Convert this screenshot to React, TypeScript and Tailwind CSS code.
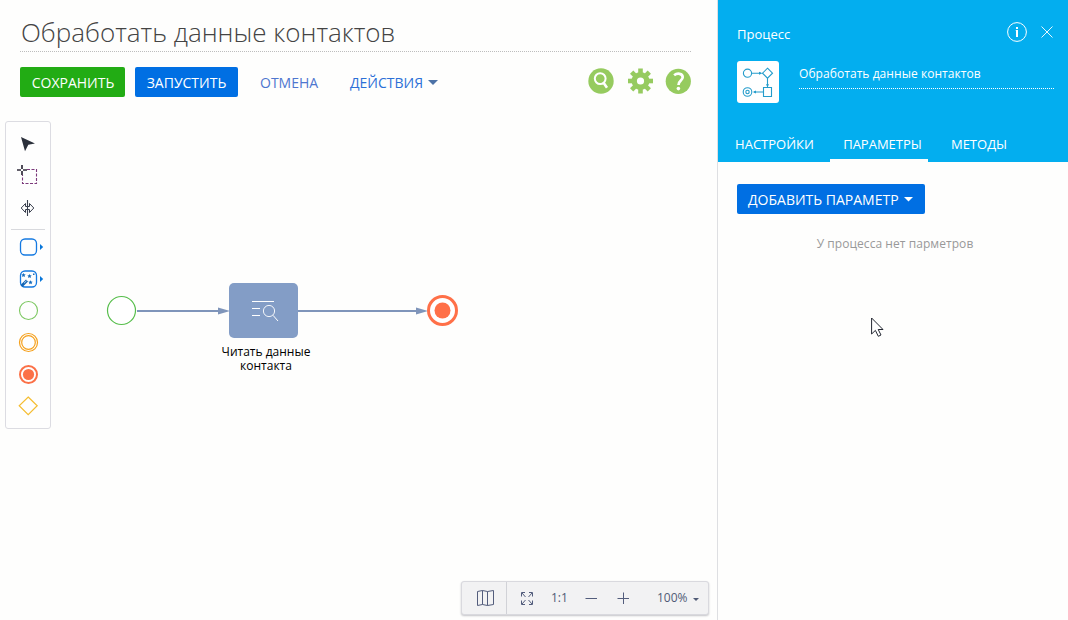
import React from "react";

const font = "font-['Open_Sans','Noto_Sans',sans-serif]";

function Caret({ className }: { className: string }) {
  return (
    <svg width="10" height="5" viewBox="0 0 10 5" className={className}>
      <path d="M0 0H10L5 5Z" fill="currentColor" />
    </svg>
  );
}

function HeaderIcons() {
  return (
    <div className="mt-px flex h-[26px] items-center gap-[13px] text-[#96cb5f]">
      <svg width="26" height="26" viewBox="0 0 26 26">
        <circle cx="13" cy="13" r="12.7" fill="currentColor" />
        <circle cx="12.2" cy="10.6" r="5.4" fill="none" stroke="#fff" strokeWidth="2" />
        <path d="M15.2 14.3L19 19.8" stroke="#fff" strokeWidth="2.6" />
      </svg>
      <svg width="26" height="26" viewBox="0 0 26 26">
        <g fill="currentColor" transform="translate(.5 0)">
          <circle cx="13" cy="13" r="9" />
          <path d="M10.7 .5h4.6v25h-4.6z" />
          <path d="M10.7 .5h4.6v25h-4.6z" transform="rotate(45 13 13)" />
          <path d="M10.7 .5h4.6v25h-4.6z" transform="rotate(90 13 13)" />
          <path d="M10.7 .5h4.6v25h-4.6z" transform="rotate(135 13 13)" />
          <circle cx="13" cy="13" r="3.6" fill="#fff" />
        </g>
      </svg>
      <svg width="26" height="26" viewBox="0 0 26 26" className="-ml-px">
        <g transform="translate(.3 .3)">
          <circle cx="13" cy="13" r="12.6" fill="currentColor" />
          <path d="M8.8 7C12 4.4 17.4 5 17.4 9C17.4 12.2 13.2 12.4 13.2 16.6" fill="none" stroke="#fff" strokeWidth="2.7" />
          <circle cx="13.1" cy="20.3" r="1.8" fill="#fff" />
        </g>
      </svg>
    </div>
  );
}

function Palette() {
  return (
    <aside className="mt-6 ml-[5px] flex h-[308px] w-[46px] flex-col items-center rounded-[3px] border border-[#dcdce2] bg-[#fefefe] pt-[6px]">
      <svg width="36" height="32" viewBox="0 0 36 32">
        <path d="M11 9L25 15.4L18.3 16.8L15 23.2Z" fill="#2b303b" />
      </svg>
      <svg width="36" height="32" viewBox="0 0 36 32" fill="none">
        <path d="M17 9.5H26.5V23.5H12.5V15" stroke="#7b397b" strokeWidth="1.1" strokeDasharray="3 1.5" />
        <path d="M12 5V9M12 11V15M7 10H11M13 10H17" stroke="#302c3b" strokeWidth="1.7" />
      </svg>
      <svg width="36" height="32" viewBox="0 0 36 32" fill="none" stroke="#383e4d">
        <path d="M17.5 8V24" strokeWidth="1.1" />
        <path d="M15.5 11.5L11.2 16L15.5 20.5V17.5H19.5V20.5L23.8 16L19.5 11.5V14.5H15.5Z" />
      </svg>
      <div className="mt-[5px] mb-px h-px w-[34px] shrink-0 bg-[#d8d9dd]" />
      <svg width="36" height="32" viewBox="0 0 36 32">
        <rect x="10.5" y="8" width="16" height="16" rx="4.5" fill="none" stroke="#1479e1" strokeWidth="1.3" />
        <path d="M30 13L33.2 16L30 19Z" fill="#0876d9" />
      </svg>
      <svg width="36" height="32" viewBox="0 0 36 32">
        <rect x="10.5" y="8" width="16" height="16" rx="4.5" fill="none" stroke="#1479e1" strokeWidth="1.3" />
        <path d="M11.5 23L17 17.5" stroke="#1265b4" strokeWidth="2.8" />
        <path d="M14 20.2L16.6 17.7" stroke="#fff" strokeWidth=".7" />
        <path d="M13.5 10l.7 1.3 1.5.2-1.1 1 .3 1.5-1.4-.7-1.4.7.3-1.5-1.1-1 1.5-.2zM19.5 11l.7 1.3 1.5.2-1.1 1 .3 1.5-1.4-.7-1.4.7.3-1.5-1.1-1 1.5-.2zM20.5 17.2l.7 1.3 1.5.2-1.1 1 .3 1.5-1.4-.7-1.4.7.3-1.5-1.1-1 1.5-.2zM23 10.5h1.5V12H23z" fill="#176cbd" />
        <path d="M30 13L33.2 16L30 19Z" fill="#0876d9" />
      </svg>
      <svg width="36" height="32" viewBox="0 0 36 32">
        <circle cx="18.5" cy="15.5" r="9" fill="none" stroke="#7bc760" strokeWidth="1.1" />
      </svg>
      <svg width="36" height="32" viewBox="0 0 36 32" fill="none" stroke="#f5a01c">
        <circle cx="18.5" cy="15.5" r="9" strokeWidth="1.2" />
        <circle cx="18.5" cy="15.5" r="6.8" strokeWidth="1.2" />
      </svg>
      <svg width="36" height="32" viewBox="0 0 36 32">
        <circle cx="18.5" cy="15.5" r="8.5" fill="none" stroke="#fb7047" strokeWidth="2" />
        <circle cx="18.5" cy="15.5" r="5.6" fill="#fb7047" />
      </svg>
      <svg width="36" height="32" viewBox="0 0 36 32">
        <path d="M18.2 6L27.2 14.8L18.2 23.6L9.2 14.8Z" fill="none" stroke="#f5bd31" strokeWidth="1.2" />
      </svg>
    </aside>
  );
}

function Diagram() {
  return (
    <>
      <svg className="absolute top-[183px] left-[100px]" width="370" height="60" viewBox="0 0 370 60">
        <circle cx="21.5" cy="30.5" r="14" fill="#fff" stroke="#57be4b" strokeWidth="1.2" />
        <path d="M37 31H121M198 31H319" stroke="#7f95ba" strokeWidth="2" />
        <path d="M118 27.6L130 31L118 34.4ZM316 27.6L328 31L316 34.4Z" fill="#7f95ba" />
        <circle cx="342.5" cy="30.5" r="14" fill="#fff" stroke="#ff7048" strokeWidth="3" />
        <circle cx="342.5" cy="30.5" r="8" fill="#ff7048" />
      </svg>
      <div className="absolute top-[186px] left-[229px] h-[55px] w-[69px] rounded-[5px] bg-[#839dc6]">
        <svg width="69" height="55" viewBox="0 0 69 55" fill="none" stroke="#fff">
          <path d="M23 18.5H45M23 25.5H31M23 32.5H31" />
          <circle cx="40" cy="28" r="5.6" strokeWidth=".9" />
          <path d="M44 32.3L49 38" />
        </svg>
      </div>
      <p className="absolute top-[248px] left-[216px] w-[100px] text-center text-[12px] leading-[14px] text-black">
        Читать данные контакта
      </p>
    </>
  );
}

function ZoomBar() {
  return (
    <div className="absolute bottom-[5px] left-[461px] flex h-[34px] w-[248px] items-center rounded-[3px] border border-[#d9d9de] bg-[#f2f2f3] text-[12px] text-[#505b76] shadow-[0_1px_2px_#c4c4c8]">
      <div className="flex h-full w-[45px] items-center justify-center border-r border-[#d1d2d7]">
        <svg width="17" height="16" viewBox="0 0 17 16" fill="none" stroke="#535d7c" className="ml-0.5">
          <path d="M.5 1.5L5.5 .5L10.5 1.5L16.5 .5V14.5L10.5 15.5L5.5 14.5L.5 15.5ZM5.5 .5V14.5M10.5 1.5V15.5" />
        </svg>
      </div>
      <svg width="12" height="13" viewBox="0 0 12 13" fill="none" stroke="#535d7c" className="ml-[14px]">
        <path d="M.5 4.5V.5H4M8 .5H11.5V4.5M11.5 8.5V12.5H8M4 12.5H.5V8.5M1 1L4.5 5M11 1L7.5 5M1 12L4.5 8M11 12L7.5 8" />
      </svg>
      <span className="ml-[18px] w-4">1:1</span>
      <svg width="12" height="12" viewBox="0 0 12 12" stroke="#535d7c" className="ml-[18px]">
        <path d="M.5 6.5H12" />
      </svg>
      <svg width="12" height="12" viewBox="0 0 12 12" stroke="#535d7c" className="ml-5">
        <path d="M.5 6.5H12M6.5 .5V12" />
      </svg>
      <span className="ml-[28px] w-8">100%</span>
      <svg width="6" height="3" viewBox="0 0 6 3" className="mt-[3px] ml-1">
        <path d="M0 0H6L3 3Z" fill="#505b76" />
      </svg>
    </div>
  );
}

function ProcessIcon() {
  return (
    <svg width="42" height="42" viewBox="0 0 42 42" fill="none" stroke="#249ccb" strokeWidth="1.1">
      <rect width="42" height="42" rx="3" fill="#fff" stroke="none" />
      <circle cx="10.5" cy="12.2" r="4.1" />
      <path d="M30.5 7.2L35.5 12.2L30.5 17.2L25.5 12.2ZM26.5 26.5H34.5V35.5H26.5Z" />
      <circle cx="10.5" cy="31" r="4.3" />
      <circle cx="10.5" cy="31" r="1.7" />
      <path d="M15 12.2H24M30.5 17V26M26 31H17" />
      <path d="M22 10.7L25.5 12.2L22 13.8ZM29 23.3L30.5 26.3L32 23.3ZM19 29.5L15.8 31L19 32.5Z" fill="#249ccb" stroke="none" />
    </svg>
  );
}

export default function App() {
  return (
    <div className={`relative flex h-[620px] w-[1068px] overflow-hidden bg-[#fefefd] ${font}`}>
      <main className="flex w-[718px] shrink-0 flex-col border-r border-[#dedfe2]">
        <header className="pr-[26px] pl-5">
          <h1 className="h-[52px] border-b border-dotted border-[#bdbdbd] pt-[15px] pl-px text-[26px] leading-[35px] font-light whitespace-nowrap text-[#444]">
            Обработать данные контактов
          </h1>
          <div className="mt-[15px] flex h-[30px] text-[14px] leading-[31px] whitespace-nowrap">
            <button className="h-[30px] w-[105px] rounded-[2px] bg-[#22ac14] pl-px text-white">СОХРАНИТЬ</button>
            <button className="ml-[10px] h-[30px] w-[103px] rounded-[2px] bg-[#006fe3] text-white">ЗАПУСТИТЬ</button>
            <button className="ml-[22px] w-[58px] text-[#4e76cf]">ОТМЕНА</button>
            <button className="ml-[32px] flex items-center text-[#2c70d7]">
              ДЕЙСТВИЯ
              <Caret className="ml-[5px] text-[#4c72a7]" />
            </button>
            <div className="ml-auto">
              <HeaderIcons />
            </div>
          </div>
        </header>
        <section className="relative min-h-0 flex-1">
          <Palette />
          <Diagram />
          <ZoomBar />
        </section>
      </main>
      <aside className="flex w-[350px] flex-col">
        <header className="flex h-[162px] flex-col bg-[#03aeef] text-white">
          <div className="flex h-[61px] items-start pt-[22px] pr-[15px] pl-[19px]">
            <h2 className="mt-[3px] text-[13px] leading-[18px]">Процесс</h2>
            <svg width="20" height="20" viewBox="0 0 20 20" className="ml-auto" fill="none" stroke="white">
              <circle cx="10" cy="10" r="9.4" strokeWidth="1" />
              <path d="M10 8V15M10 5V7" strokeWidth="2" />
              <path d="M8.5 8.5H9.5" strokeWidth="1" opacity=".5" />
            </svg>
            <svg width="12" height="12" viewBox="0 0 12 12" className="mt-1 ml-[14px]" stroke="white" strokeWidth=".9">
              <path d="M.5 .5L11.5 11.5M11.5 .5L.5 11.5" />
            </svg>
          </div>
          <div className="flex h-[42px] pr-[14px] pl-[19px]">
            <ProcessIcon />
            <div className="ml-5 h-[28px] flex-1 border-b border-dotted border-white pt-1 text-[12px] leading-[18px] tracking-[0.06px]">
              Обработать данные контактов
            </div>
          </div>
          <nav className="mt-auto flex h-[34px] text-center text-[13px] leading-[33px] whitespace-nowrap">
            <div className="w-[113px]">НАСТРОЙКИ</div>
            <div className="-ml-px flex w-[98px] justify-center border-b-[3px] border-[#fefefd] pl-[7px]">ПАРАМЕТРЫ</div>
            <div className="ml-[22px] w-[58px]">МЕТОДЫ</div>
          </nav>
        </header>
        <div className="px-[19px] pt-[22px]">
          <button className="flex h-[30px] w-[188px] items-center rounded-[2px] bg-[#006fe3] pl-[11px] text-[14px] leading-[30px] whitespace-nowrap text-white">
            <span className="pt-0.5">ДОБАВИТЬ ПАРАМЕТР</span>
            <svg width="9" height="5" viewBox="0 0 9 5" className="ml-[5px]">
              <path d="M0 0H9L4.5 4.5Z" fill="white" />
            </svg>
          </button>
          <p className="mt-[21px] pl-1 text-center text-[12px] leading-[18px] tracking-[0.06px] text-[#999]">У процесса нет парметров</p>
        </div>
      </aside>
      <svg width="14" height="21" viewBox="0 0 14 21" className="absolute top-[317px] left-[871px]">
        <path d="M.6 1V17L4.4 13.4L7.3 19.3L10 18L7.2 12.5H12Z" fill="#fff" stroke="#222630" strokeWidth="1" />
      </svg>
    </div>
  );
}
